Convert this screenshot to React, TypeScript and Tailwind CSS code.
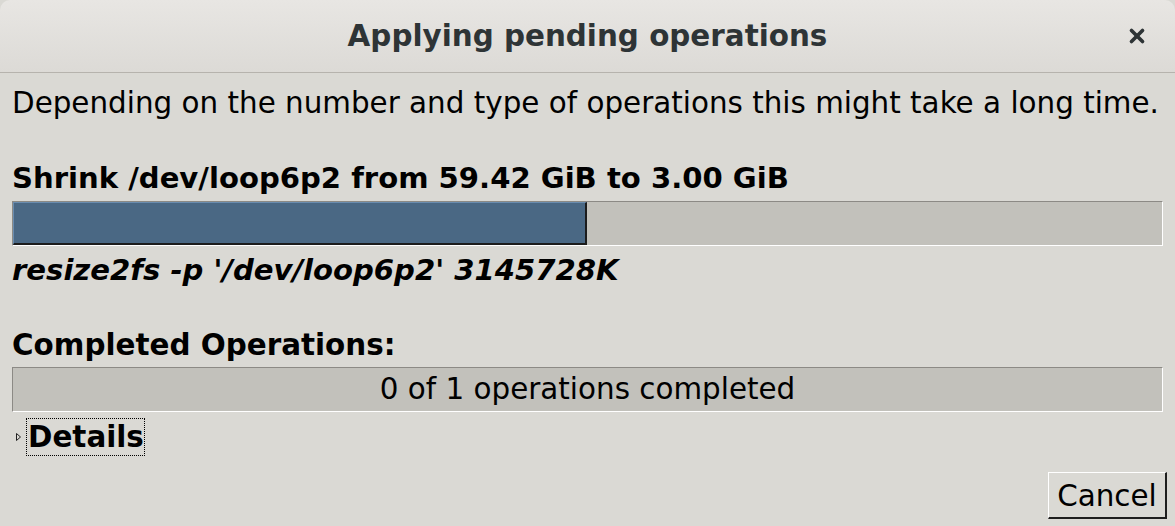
import { X } from "lucide-react";

const font = { fontFamily: '"DejaVu Sans", Verdana, sans-serif' };

const Trough = ({ children }: { children?: React.ReactNode }) => (
  <div className="relative h-[45px] bg-[#c2c1bb] border-t border-l border-t-[#8c8a85] border-l-[#8c8a85] border-b border-r border-b-white border-r-white">
    {children}
  </div>
);

export default function App() {
  return (
    <div className="w-[1175px] h-[526px] bg-[#dad9d4] text-black overflow-hidden" style={font}>
      <div className="h-[73px] rounded-t-[10px] bg-gradient-to-b from-[#e8e6e3] to-[#dcdad6] border-b border-[#b6b3ad] flex items-center justify-center relative">
        <span className="text-[29.4px] font-bold text-[#2e3436]">Applying pending operations</span>
        <X className="absolute right-[27px] top-[25px] text-[#2e3436]" size={22} strokeWidth={4} />
      </div>
      <div className="px-[12px] flex flex-col">
        <p className="text-[29.4px] mt-[12px] leading-[36px] whitespace-nowrap">
          Depending on the number and type of operations this might take a long time.
        </p>
        <p className="text-[29.1px] font-bold mt-[39px] leading-[36px] whitespace-nowrap">
          Shrink /dev/loop6p2 from 59.42 GiB to 3.00 GiB
        </p>
        <div className="mt-[5px]">
          <Trough>
            <div className="absolute left-0 top-0 h-[43px] w-[574px] bg-[#4a6884] border-t border-l border-[#6a8db0] border-b-2 border-r-2 border-b-[#1c1c1c] border-r-[#1c1c1c]" />
          </Trough>
        </div>
        <p className="text-[29.1px] font-bold italic leading-[36px] mt-[6px] whitespace-nowrap">
          resize2fs -p '/dev/loop6p2' 3145728K
        </p>
        <p className="text-[29.4px] font-bold leading-[36px] mt-[39px]">Completed Operations:</p>
        <div className="mt-[4px]">
          <Trough>
            <div className="h-full flex items-center justify-center text-[29.4px]">0 of 1 operations completed</div>
          </Trough>
        </div>
        <div className="flex items-center mt-[6px]">
          <svg width="8" height="10" viewBox="0 0 8 10" className="ml-[3px] mr-[3px]">
            <path d="M1.5 1.5 L5.5 5 L1.5 8.5 Z" fill="none" stroke="#222" strokeWidth="1" />
          </svg>
          <span className="text-[29.4px] font-bold leading-[34px] pl-[1px] pr-0 py-[1px] border border-dotted border-black">Details</span>
        </div>
        <div className="flex justify-end mt-[16px] mr-[-4px]">
          <button className="w-[119px] h-[47px] pt-[3px] bg-[#dad9d4] border border-t-white border-l-white border-b-2 border-r-2 border-b-[#1e1e1e] border-r-[#1e1e1e] text-[29.4px] leading-none">
            Cancel
          </button>
        </div>
      </div>
    </div>
  );
}
